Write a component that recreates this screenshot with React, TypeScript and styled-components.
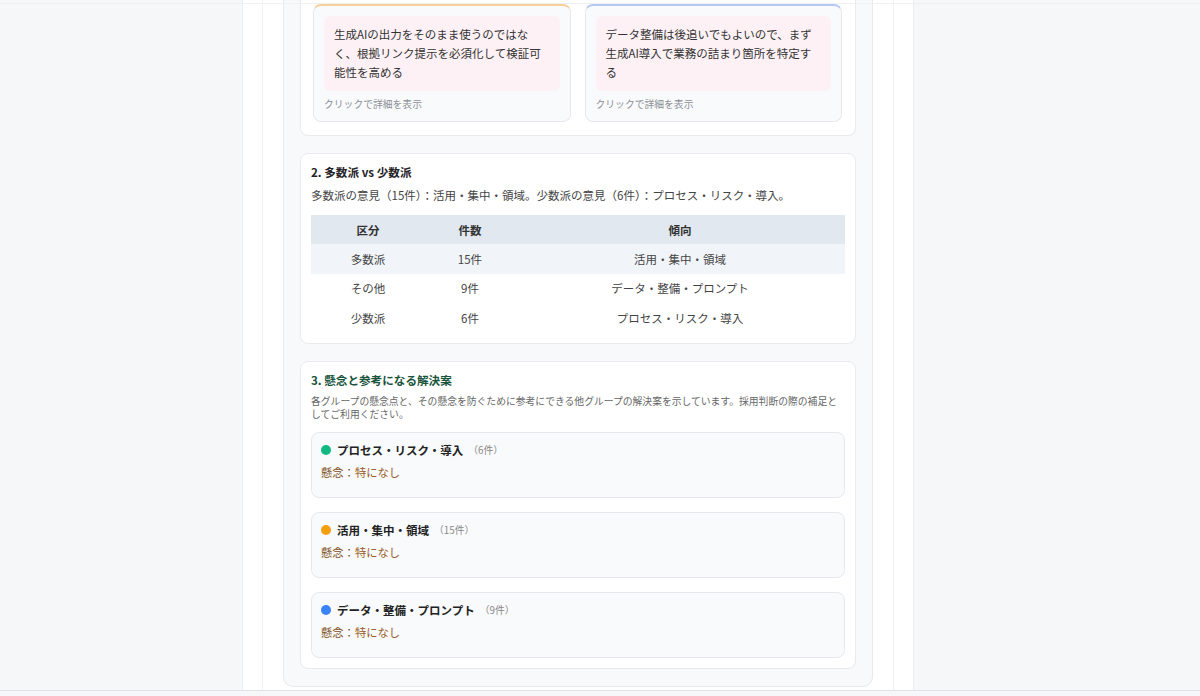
import React from "react";
import styled, { createGlobalStyle } from "styled-components";

const Global = createGlobalStyle`
  html, body {
    margin: 0;
    padding: 0;
  }
  body {
    background: #f6f7f9;
    font-family: "Noto Sans CJK JP", "Noto Sans", sans-serif;
    color: #333;
  }
  * {
    box-sizing: border-box;
  }
`;

const Viewport = styled.div`
  position: relative;
  height: 691px;
  display: flex;
  overflow: hidden;
  border-bottom: 1px solid #dfe2e6;
`;

const TopRule = styled.div`
  position: absolute;
  top: 0;
  left: 0;
  right: 0;
  height: 4px;
  border-bottom: 1px solid #eef0f2;
  pointer-events: none;
`;

const Column = styled.div`
  margin-left: 242px;
  width: 672px;
  display: flex;
  background: #fff;
  border-left: 1px solid #eceef1;
  border-right: 1px solid #eceef1;
  padding: 0 19px;
`;

const Inner = styled.div`
  flex: 1;
  display: flex;
  flex-direction: column;
  background: #fff;
  border-left: 1px solid #eff1f3;
  border-right: 1px solid #eff1f3;
  padding: 0 20px;
`;

const Panel = styled.div`
  display: flex;
  flex-direction: column;
  gap: 17px;
  background: #f8f9fa;
  border: 1px solid #e7e9ec;
  border-top: none;
  border-radius: 0 0 10px 10px;
  padding: 0 16px 17px;
`;

const Section = styled.section`
  background: #fff;
  border: 1px solid #e8eaee;
  border-radius: 8px;
  padding: 10px;
`;

const CardsSection = styled(Section)`
  border-top: none;
  border-radius: 0 0 8px 8px;
  padding: 4px 13px 13px 12px;
  display: grid;
  grid-template-columns: 1fr 1fr;
  gap: 14px;
`;

const IdeaCard = styled.div<{ $accent: string }>`
  display: flex;
  flex-direction: column;
  background: #f9fafb;
  border: 1px solid #e6e8eb;
  border-top: 2px solid ${(p) => p.$accent};
  border-radius: 8px;
  padding: 10px;
`;

const Quote = styled.div`
  background: #fdf1f5;
  border-radius: 6px;
  padding: 9px 10px;
  font-size: 11.5px;
  line-height: 19px;
  color: #333;
`;

const Hint = styled.div`
  margin-top: 6px;
  font-size: 9.8px;
  line-height: 14px;
  color: #8b8f96;
`;

const Title = styled.h3<{ $color?: string }>`
  margin: 0;
  font-size: 11.6px;
  line-height: 16px;
  font-weight: 700;
  color: ${(p) => p.$color || "#1f2328"};
`;

const Lead = styled.p`
  margin: 6px 0 0;
  font-size: 11.5px;
  line-height: 18px;
  color: #444;
`;

const Note = styled.p`
  margin: 7px 0 0;
  font-size: 9.8px;
  line-height: 13px;
  color: #666;
`;

const Table = styled.table`
  margin-top: 11px;
  width: 100%;
  border-collapse: collapse;
  table-layout: fixed;
  font-size: 11.5px;
`;

const Col = styled.col<{ $w?: number }>`
  width: ${(p) => (p.$w ? `${p.$w}px` : "auto")};
`;

const HeadCell = styled.th`
  height: 29px;
  padding: 0;
  background: #e2e8f0;
  font-weight: 600;
  color: #333;
  text-align: center;
`;

const Row = styled.tr<{ $shade?: boolean }>`
  background: ${(p) => (p.$shade ? "#f1f5f9" : "#fff")};
`;

const Cell = styled.td`
  height: 29.5px;
  padding: 0;
  color: #444;
  text-align: center;
`;

const GroupList = styled.div`
  margin-top: 11px;
  display: flex;
  flex-direction: column;
  gap: 14px;
`;

const GroupCard = styled.div`
  background: #f9fafb;
  border: 1px solid #e6e8eb;
  border-radius: 8px;
  padding: 9px 10px 17px 9px;
`;

const GroupHead = styled.div`
  display: flex;
  align-items: center;
  height: 16px;
`;

const Dot = styled.span<{ $color: string }>`
  width: 10px;
  height: 10px;
  border-radius: 50%;
  background: ${(p) => p.$color};
  margin-right: 6px;
  flex: none;
`;

const GroupName = styled.span`
  font-size: 11.5px;
  font-weight: 700;
  color: #222;
`;

const GroupCount = styled.span`
  margin-left: 5px;
  font-size: 9.8px;
  color: #888;
`;

const Concern = styled.div`
  margin-top: 6px;
  font-size: 11.3px;
  line-height: 16px;
  color: #9a5a22;
`;

const ConcernLabel = styled.span`
  color: #7c4a14;
`;

const ideas = [
  {
    accent: "#f7cf98",
    text: "生成AIの出力をそのまま使うのではなく、根拠リンク提示を必須化して検証可能性を高める",
  },
  {
    accent: "#b3c8f3",
    text: "データ整備は後追いでもよいので、まず生成AI導入で業務の詰まり箇所を特定する",
  },
];

const rows = [
  { kind: "多数派", count: "15件", trend: "活用・集中・領域", shade: true },
  { kind: "その他", count: "9件", trend: "データ・整備・プロンプト" },
  { kind: "少数派", count: "6件", trend: "プロセス・リスク・導入" },
];

const groups = [
  { color: "#10b981", name: "プロセス・リスク・導入", count: "（6件）" },
  { color: "#f59e0b", name: "活用・集中・領域", count: "（15件）" },
  { color: "#3b82f6", name: "データ・整備・プロンプト", count: "（9件）" },
];

export default function App() {
  return (
    <>
      <Global />
      <Viewport>
        <Column>
          <Inner>
            <Panel>
              <CardsSection>
                {ideas.map((idea) => (
                  <IdeaCard key={idea.text} $accent={idea.accent}>
                    <Quote>{idea.text}</Quote>
                    <Hint>クリックで詳細を表示</Hint>
                  </IdeaCard>
                ))}
              </CardsSection>

              <Section>
                <Title>2. 多数派 vs 少数派</Title>
                <Lead>
                  多数派の意見（15件）：活用・集中・領域。少数派の意見（6件）：プロセス・リスク・導入。
                </Lead>
                <Table>
                  <colgroup>
                    <Col $w={114} />
                    <Col $w={90} />
                    <Col />
                  </colgroup>
                  <thead>
                    <tr>
                      <HeadCell>区分</HeadCell>
                      <HeadCell>件数</HeadCell>
                      <HeadCell>傾向</HeadCell>
                    </tr>
                  </thead>
                  <tbody>
                    {rows.map((r) => (
                      <Row key={r.kind} $shade={r.shade}>
                        <Cell>{r.kind}</Cell>
                        <Cell>{r.count}</Cell>
                        <Cell>{r.trend}</Cell>
                      </Row>
                    ))}
                  </tbody>
                </Table>
              </Section>

              <Section>
                <Title $color="#17543a">3. 懸念と参考になる解決案</Title>
                <Note>
                  各グループの懸念点と、その懸念を防ぐために参考にできる他グループの解決案を示しています。採用判断の際の補足としてご利用ください。
                </Note>
                <GroupList>
                  {groups.map((g) => (
                    <GroupCard key={g.name}>
                      <GroupHead>
                        <Dot $color={g.color} />
                        <GroupName>{g.name}</GroupName>
                        <GroupCount>{g.count}</GroupCount>
                      </GroupHead>
                      <Concern>
                        <ConcernLabel>懸念：</ConcernLabel>特になし
                      </Concern>
                    </GroupCard>
                  ))}
                </GroupList>
              </Section>
            </Panel>
          </Inner>
        </Column>
        <TopRule />
      </Viewport>
    </>
  );
}
